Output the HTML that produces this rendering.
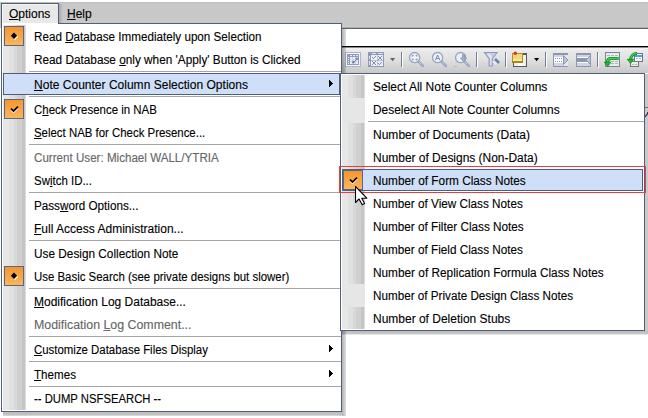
<!DOCTYPE html><html><head><meta charset="utf-8"><style>
*{margin:0;padding:0;box-sizing:border-box}
html,body{width:648px;height:418px;overflow:hidden;background:#fff;position:relative;font-family:"Liberation Sans", sans-serif}
div{position:absolute}
.t{-webkit-text-stroke:0.12px currentColor;font-size:12px;line-height:22px;white-space:pre;transform-origin:0 0;height:22px}
.t u{text-decoration:underline;text-underline-offset:1px}
.sep{height:1px;background:#a6a6a6}
.gut{background:linear-gradient(to right,#e7e7e7 0px,#e7e7e7 6px,#e0e0e0 6px,#e0e0e0 11px,#d9d9d9 11px,#d9d9d9 14px,#d0d0d0 14px,#d0d0d0 19px,#c5c5c5 19px,#c5c5c5 22px,#dcdcdc 22px,#dcdcdc 23px)}
.chk{width:20px;height:20px;border:1px solid #55688a;background:linear-gradient(#f6962b,#fbb55c)}
.hl{border:1px solid #4f5e7a;background:#cfdff7}
.arr{width:4px;height:7px;background:linear-gradient(to right,#000 1px,transparent 1px),linear-gradient(to right,#000 2px,transparent 2px) 0 1px/4px 5px no-repeat,linear-gradient(to right,#000 3px,transparent 3px) 0 2px/4px 3px no-repeat,linear-gradient(to right,#000 4px,transparent 4px) 0 3px/4px 1px no-repeat}
</style></head><body><div style="left:0;top:0;width:648px;height:28px;background:linear-gradient(#fff 0,#fff 2px,#bebebe 2px,#bebebe 3px,#c8c8c8 3px)"></div>
<div style="left:342px;top:26px;width:306px;height:3px;background:linear-gradient(#cecece 0,#cecece 1px,#acacac 1px,#acacac 2px,#646464 2px)"></div>
<div style="left:342px;top:29px;width:306px;height:17px;background:#fff"></div>
<div style="left:342px;top:46px;width:306px;height:1px;background:#000"></div>
<div style="left:342px;top:47px;width:306px;height:26px;background:linear-gradient(#8c8c8c 0,#8c8c8c 1px,#f2f2f2 1px,#e8e8e8 5px,#e2e2e2 45%,#c8c8c8)"></div>
<svg style="position:absolute;left:0;top:0" width="648" height="418" shape-rendering="crispEdges">
<g fill="#747d96">
<rect x="401" y="52" width="1" height="15"/><rect x="476" y="52" width="1" height="15"/><rect x="505" y="52" width="1" height="15"/><rect x="545" y="52" width="1" height="15"/><rect x="597" y="52" width="1" height="15"/>
</g>
<g fill="#fff">
<rect x="402" y="53" width="1" height="15"/><rect x="477" y="53" width="1" height="15"/><rect x="506" y="53" width="1" height="15"/><rect x="546" y="53" width="1" height="15"/><rect x="598" y="53" width="1" height="15"/>
</g>
<!-- icon1 -->
<rect x="345" y="52" width="16" height="15" fill="#abb6cd"/><rect x="346" y="53" width="14" height="13" fill="#f4f6f9"/>
<rect x="347" y="54" width="12" height="11" fill="#8e9bb9"/>
<rect x="350" y="57" width="8" height="7" fill="#eef1f6"/>
<g fill="#cdd4e3"><rect x="352" y="57" width="1" height="7"/><rect x="355" y="57" width="1" height="7"/><rect x="350" y="59" width="8" height="1"/><rect x="350" y="61" width="8" height="1"/></g>
<g fill="#e8ecf4"><rect x="350" y="55" width="2" height="1"/><rect x="353" y="55" width="2" height="1"/><rect x="356" y="55" width="2" height="1"/>
<rect x="348" y="57" width="1" height="1"/><rect x="348" y="59" width="1" height="1"/><rect x="348" y="61" width="1" height="1"/><rect x="348" y="63" width="1" height="1"/></g>
<g shape-rendering="auto"><path d="M353.5 62.5l3.5-3.5" stroke="#7383a8" stroke-width="1"/>
<path d="M353.3 60.6l1.6 1.6-1.6 1.6-1.6-1.6z M356.8 57.2l1.5 1.5-1.5 1.5-1.5-1.5z" fill="#7080a6"/></g>
<!-- icon2 -->
<rect x="368" y="52" width="16" height="15" fill="#8e9bb8"/>
<rect x="371" y="55" width="12" height="11" fill="#eceff5"/>
<g fill="#bcc5d8"><rect x="377" y="55" width="1" height="11"/><rect x="371" y="60" width="12" height="1"/></g>
<g fill="#dfe4ee"><rect x="372" y="53" width="4" height="1"/><rect x="378" y="53" width="5" height="1"/><rect x="369" y="56" width="1" height="3"/><rect x="369" y="61" width="1" height="4"/></g>
<g fill="#8190b0">
<rect x="372" y="57" width="1" height="1"/><rect x="373" y="58" width="1" height="1"/><rect x="374" y="57" width="1" height="1"/><rect x="375" y="56" width="1" height="1"/>
<rect x="378" y="56" width="1" height="1"/><rect x="381" y="56" width="1" height="1"/><rect x="379" y="57" width="2" height="2"/><rect x="378" y="59" width="1" height="1"/><rect x="381" y="59" width="1" height="1"/>
<rect x="372" y="61" width="1" height="1"/><rect x="375" y="61" width="1" height="1"/><rect x="373" y="62" width="2" height="2"/><rect x="372" y="64" width="1" height="1"/><rect x="375" y="64" width="1" height="1"/>
<rect x="378" y="63" width="1" height="1"/><rect x="379" y="64" width="1" height="1"/><rect x="380" y="63" width="1" height="1"/><rect x="381" y="62" width="1" height="1"/>
</g>
<path d="M390 58h5.2l-2.6 3.2z" fill="#5a6078" shape-rendering="auto"/>
<g shape-rendering="auto">
<g id="mg">
<line x1="418.6" y1="61.6" x2="422.8" y2="65.8" stroke="#94a3c3" stroke-width="2.6" stroke-linecap="round"/>
<line x1="419" y1="62" x2="422.6" y2="65.6" stroke="#e8ecf4" stroke-width=".9" stroke-dasharray="1 .9"/>
<circle cx="414.6" cy="57.6" r="5.1" fill="#eef1f7" stroke="#97a6c5" stroke-width="1.3"/>
</g>
<path d="M412.3 56.6v-1.3h1.3M415.6 55.3h1.3v1.3M416.9 58.6v1.3h-1.3M413.6 59.9h-1.3v-1.3" stroke="#7a89ad" stroke-width="1" fill="none"/>
<use href="#mg" x="23"/>
<path d="M435.4 60.2l2.2-5.2 2.2 5.2M436.3 58.6h2.6" stroke="#7a89ad" stroke-width="1" fill="none"/>
<use href="#mg" x="46"/>
<path d="M462.5 54.5v3.5h-2l3 3.5 3-3.5h-2v-3.5z" fill="#a4b1cc" stroke="#8392b4" stroke-width=".8"/>
<rect x="454" y="66" width="3" height="1" fill="#a8b8d8"/>
<!-- funnel -->
<path d="M484.6 52.6h12.3l-4.6 6v7.4h-3.1v-7.4z" fill="#e0e5ef" stroke="#8b99b9" stroke-width="1.2"/>
<path d="M489.6 53.6h6l-3 4z" fill="#c4cde0"/>
<path d="M496 58l4 4-4 4-4-4z" fill="#7584a6"/>
<path d="M492 62l4 4 2-2-4-4z" fill="#e8ecf3"/>
<!-- sticky -->
<rect x="513.5" y="53.5" width="13" height="13" fill="#efefef" stroke="#5a5a5a" stroke-width="1"/>
<rect x="523" y="53" width="4" height="2" fill="#5a5a5a"/>
<rect x="518" y="62" width="5" height="4" fill="#fff"/>
<rect x="512" y="53" width="11" height="10" fill="#b2941c"/>
<rect x="513" y="54" width="9" height="7" fill="#f2d67c"/>
<rect x="513" y="59" width="9" height="2" fill="#f9e6a8"/>
<rect x="512" y="61" width="11" height="2" fill="#a8880e"/>
<circle cx="515.3" cy="53.3" r="1.7" fill="#e62a2c"/>
<path d="M534 58h5.2l-2.6 3.2z" fill="#000"/>
</g>
<!-- icon A -->
<rect x="553" y="53" width="15" height="14" fill="#8d97b1"/>
<rect x="554" y="55" width="10" height="11" fill="#cfd4e2"/>
<rect x="554" y="57" width="10" height="6" fill="#fbfcfd"/>
<g fill="#8d97b1"><rect x="555" y="58" width="1" height="1"/><rect x="557" y="58" width="1" height="1"/><rect x="559" y="58" width="1" height="1"/><rect x="561" y="58" width="1" height="1"/>
<rect x="555" y="61" width="1" height="1"/><rect x="557" y="61" width="1" height="1"/><rect x="559" y="61" width="1" height="1"/><rect x="561" y="61" width="1" height="1"/></g>
<rect x="564" y="55" width="4" height="11" fill="#e6e8ee"/>
<path d="M563.5 55.5l4.5 4.5-4.5 4.5z" fill="#bcc4d8" stroke="#8d97b1" stroke-width="1" shape-rendering="auto"/>
<!-- icon B -->
<rect x="576" y="53" width="15" height="14" fill="#8d97b1"/>
<rect x="577" y="55" width="13" height="11" fill="#cfd4e2"/>
<rect x="577" y="57" width="13" height="6" fill="#fbfcfd"/>
<rect x="577" y="58" width="10" height="4" fill="#8d97b1"/>
<path d="M590.5 55.5l-4.5 4.5 4.5 4.5z" fill="#bcc4d8" stroke="#8d97b1" stroke-width="1" shape-rendering="auto"/>
<!-- icon C -->
<rect x="605" y="52" width="15" height="15" fill="#7f858d"/>
<rect x="606" y="53" width="13" height="13" fill="#e4ecec"/>
<g fill="#aeb5bd"><rect x="607" y="55" width="3" height="1"/><rect x="611" y="55" width="3" height="1"/><rect x="615" y="55" width="3" height="1"/>
<rect x="611" y="61" width="3" height="1"/><rect x="615" y="61" width="3" height="1"/><rect x="611" y="63" width="3" height="1"/><rect x="615" y="63" width="3" height="1"/></g>
<g shape-rendering="auto">
<path d="M618.6 58.5h-7.5c-2.2 0-3.6 1.6-3.6 3.8v.6" fill="none" stroke="#128c24" stroke-width="3.2"/>
<path d="M618 58.5h-6.9c-2.2 0-3.6 1.6-3.6 3.8v.6" fill="none" stroke="#40d452" stroke-width="1.4"/>
<path d="M604.4 62.2h6.4l-3.2 4.3z" fill="#22b834" stroke="#128c24" stroke-width=".9"/>
</g>
<!-- icon D -->
<rect x="630" y="61" width="9" height="6" fill="#6e767e"/>
<rect x="631" y="62" width="7" height="4" fill="#e6f0f0"/>
<g fill="#aeb5bd"><rect x="632" y="64" width="2" height="1"/><rect x="635" y="64" width="2" height="1"/></g>
<rect x="634" y="53" width="9" height="9" fill="#6e767e"/>
<rect x="635" y="54" width="7" height="7" fill="#fafcfc"/>
<rect x="635" y="55" width="7" height="2" fill="#38a6ee"/>
<g fill="#aeb5bd"><rect x="636" y="58" width="2" height="1"/><rect x="639" y="58" width="2" height="1"/></g>
<g shape-rendering="auto">
<path d="M637 53.4c-3.5 0-6.4 2.6-6.4 6.6" fill="none" stroke="#128c24" stroke-width="3"/>
<path d="M636.5 53.4c-3.2 0-5.9 2.6-5.9 6.6" fill="none" stroke="#40d452" stroke-width="1.2"/>
<path d="M627.3 59.3h6.4l-3.2 4z" fill="#22b834" stroke="#128c24" stroke-width=".9"/>
</g>
</svg>

<div style="left:1px;top:3px;width:58px;height:21px;border:1px solid #4f5e7a;border-bottom:none;background:#e8e8e8;box-shadow:inset 1px 1px 0 #f6f6f6"></div>
<div style="left:59px;top:4px;width:4px;height:19px;background:linear-gradient(to right,#a8a8a8,#c8c8c8)"></div>
<div class="t" style="left:9px;top:3px;color:#000;transform:scaleX(1.0000)"><u>O</u>ptions</div>
<div class="t" style="left:67px;top:3px;color:#000;transform:scaleX(1.0000)"><u>H</u>elp</div>
<div style="left:1px;top:23px;width:341px;height:389px;border:1px solid #4f5e7a;border-top:none;background:#fff"></div>
<div style="left:58px;top:23px;width:284px;height:1px;background:#4f5e7a"></div>
<div style="left:342px;top:29px;width:4px;height:387px;background:linear-gradient(to right,rgba(0,0,0,.30),rgba(0,0,0,.12))"></div>
<div style="left:3px;top:412px;width:339px;height:4px;background:linear-gradient(rgba(0,0,0,.25) 60%,rgba(0,0,0,.12))"></div>
<div class="gut" style="left:3px;top:25px;width:23px;height:385px"></div>
<div class="sep" style="left:29px;top:71px;width:312px"></div>
<div class="sep" style="left:29px;top:96px;width:312px"></div>
<div class="sep" style="left:29px;top:144px;width:312px"></div>
<div class="sep" style="left:29px;top:192px;width:312px"></div>
<div class="sep" style="left:29px;top:240px;width:312px"></div>
<div class="sep" style="left:29px;top:288px;width:312px"></div>
<div class="sep" style="left:29px;top:336px;width:312px"></div>
<div class="sep" style="left:29px;top:361px;width:312px"></div>
<div class="sep" style="left:29px;top:386px;width:312px"></div>
<div class="chk" style="left:4px;top:26px"></div>
<svg style="position:absolute;left:4px;top:26px" width="20" height="20"><path d="M11 7.6l3.2 3.2-3.2 3.2-3.2-3.2z" fill="#fff"/><path d="M10 6.6l3.2 3.2-3.2 3.2-3.2-3.2z" fill="#000"/></svg>
<div class="t" style="left:34px;top:26px;color:#000;transform:scaleX(0.9718)">Read <u>D</u>atabase Immediately upon Selection</div>
<div class="t" style="left:34px;top:49px;color:#000;transform:scaleX(0.9823)">Read Database <u>o</u>nly when &#39;Apply&#39; Button is Clicked</div>
<div class="hl" style="left:3px;top:73px;width:337px;height:22px"></div>
<div class="arr" style="left:329px;top:80px"></div>
<div class="t" style="left:34px;top:74px;color:#000;transform:scaleX(1.0023)"><u>N</u>ote Counter Column Selection Options</div>
<div class="chk" style="left:4px;top:99px"></div>
<svg style="position:absolute;left:4px;top:99px" width="20" height="20"><path d="M7 9.6l2.5 2.5 4.5-4.5" fill="none" stroke="#fff" stroke-width="1.8" transform="translate(0,1)"/><path d="M7 9.6l2.5 2.5 4.5-4.5" fill="none" stroke="#000" stroke-width="1.8"/></svg>
<div class="t" style="left:34px;top:99px;color:#000;transform:scaleX(0.9539)">C<u>h</u>eck Presence in NAB</div>
<div class="t" style="left:34px;top:122px;color:#000;transform:scaleX(0.9508)"><u>S</u>elect NAB for Check Presence...</div>
<div class="t" style="left:34px;top:147px;color:#666666;transform:scaleX(0.9675)">Current User: Michael WALL/YTRIA</div>
<div class="t" style="left:34px;top:170px;color:#000;transform:scaleX(0.9550)">Sw<u>i</u>tch ID...</div>
<div class="t" style="left:34px;top:195px;color:#000;transform:scaleX(0.9726)">Pass<u>w</u>ord Options...</div>
<div class="t" style="left:34px;top:218px;color:#000;transform:scaleX(1.0014)"><u>F</u>ull Access Administration...</div>
<div class="t" style="left:34px;top:243px;color:#000;transform:scaleX(0.9842)">Use Design Collection Note</div>
<div class="chk" style="left:4px;top:266px"></div>
<svg style="position:absolute;left:4px;top:266px" width="20" height="20"><path d="M11 7.6l3.2 3.2-3.2 3.2-3.2-3.2z" fill="#fff"/><path d="M10 6.6l3.2 3.2-3.2 3.2-3.2-3.2z" fill="#000"/></svg>
<div class="t" style="left:34px;top:266px;color:#000;transform:scaleX(0.9521)">Use Basic Search (see private designs but slower)</div>
<div class="t" style="left:34px;top:291px;color:#000;transform:scaleX(0.9987)"><u>M</u>odification Log Database...</div>
<div class="t" style="left:34px;top:314px;color:#666666;transform:scaleX(1.0309)">Modification <u>L</u>og Comment...</div>
<div class="arr" style="left:329px;top:345px"></div>
<div class="t" style="left:34px;top:339px;color:#000;transform:scaleX(0.9514)"><u>C</u>ustomize Database Files Display</div>
<div class="arr" style="left:329px;top:370px"></div>
<div class="t" style="left:34px;top:364px;color:#000;transform:scaleX(0.9674)"><u>T</u>hemes</div>
<div class="t" style="left:34px;top:388px;color:#000;transform:scaleX(0.9407)">-- DUMP NSFSEARCH --</div>
<div style="left:340px;top:73px;width:305px;height:258px;border:1px solid #4f5e7a;background:#fff"></div>
<div style="left:645px;top:107px;width:3px;height:1px;background:#909090"></div>
<svg style="position:absolute;left:645px;top:112px" width="3" height="6"><path d="M0 5L3 1" stroke="#23305a" stroke-width="1.2"/><rect x="2" y="0" width="1" height="1" fill="#c03030"/></svg>
<div style="left:645px;top:74px;width:3px;height:257px;background:rgba(0,0,0,.21)"></div>
<div style="left:342px;top:331px;width:306px;height:4px;background:linear-gradient(rgba(0,0,0,.26) 0,rgba(0,0,0,.24) 2px,rgba(0,0,0,.2) 3px,rgba(0,0,0,.1) 3px)"></div>
<div class="gut" style="left:342px;top:75px;width:23px;height:254px"></div>
<div style="left:342px;top:98px;width:23px;height:25px;background:#e6e6e6"></div>
<div style="left:342px;top:284px;width:23px;height:23px;background:#e6e6e6"></div>
<div class="sep" style="left:368px;top:121px;width:276px"></div>
<div class="t" style="left:373px;top:76px;color:#000;transform:scaleX(0.9977)">Select All Note Counter Columns</div>
<div class="t" style="left:373px;top:99px;color:#000;transform:scaleX(0.9920)">Deselect All Note Counter Columns</div>
<div class="t" style="left:373px;top:124px;color:#000;transform:scaleX(1.0019)">Number of Documents (Data)</div>
<div class="t" style="left:373px;top:147px;color:#000;transform:scaleX(0.9958)">Number of Designs (Non-Data)</div>
<div class="hl" style="left:342px;top:169px;width:301px;height:22px"></div>
<div class="chk" style="left:343px;top:170px"></div>
<svg style="position:absolute;left:343px;top:170px" width="20" height="20"><path d="M7 9.6l2.5 2.5 4.5-4.5" fill="none" stroke="#fff" stroke-width="1.8" transform="translate(0,1)"/><path d="M7 9.6l2.5 2.5 4.5-4.5" fill="none" stroke="#000" stroke-width="1.8"/></svg>
<div class="t" style="left:373px;top:170px;color:#000;transform:scaleX(0.9832)">Number of Form Class Notes</div>
<div class="t" style="left:373px;top:193px;color:#000;transform:scaleX(0.9778)">Number of View Class Notes</div>
<div class="t" style="left:373px;top:216px;color:#000;transform:scaleX(0.9786)">Number of Filter Class Notes</div>
<div class="t" style="left:373px;top:239px;color:#000;transform:scaleX(0.9778)">Number of Field Class Notes</div>
<div class="t" style="left:373px;top:262px;color:#000;transform:scaleX(0.9855)">Number of Replication Formula Class Notes</div>
<div class="t" style="left:373px;top:285px;color:#000;transform:scaleX(0.9737)">Number of Private Design Class Notes</div>
<div class="t" style="left:373px;top:308px;color:#000;transform:scaleX(0.9985)">Number of Deletion Stubs</div>
<div style="left:339px;top:166px;width:307px;height:27px;border:1px solid #ee3b3b"></div>
<svg style="position:absolute;left:355px;top:186px" width="14" height="21"><path d="M.5 .5V16.5L4 13L7.3 18.8L9.6 17.6L6.8 12.2H11.8Z" fill="#fff" stroke="#000" stroke-width="1.1" stroke-linejoin="round"/></svg></body></html>
